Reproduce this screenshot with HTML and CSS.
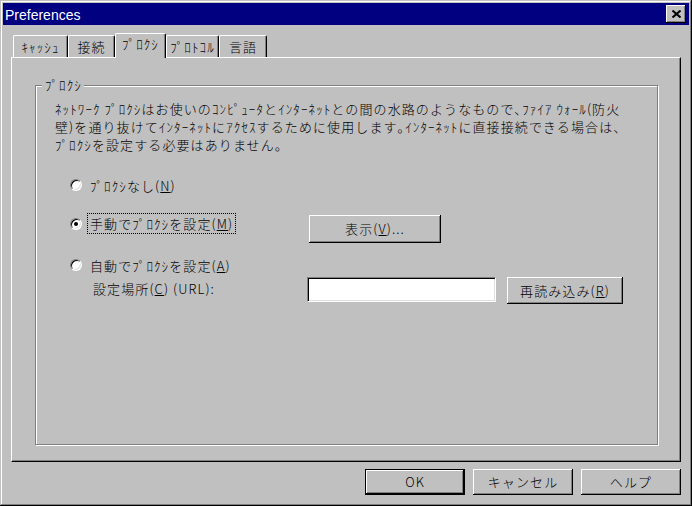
FILE: index.html
```html
<!DOCTYPE html>
<html lang="ja">
<head>
<meta charset="utf-8">
<title>Preferences</title>
<link rel="stylesheet" href="styles.css">
</head>
<body>
<div class="window">
  <div class="titlebar">
    <span class="title">Preferences</span>
    <span class="close"><svg width="9" height="8" viewBox="0 0 9 8"><path d="M0.5 0.5 L8.5 7.5 M8.5 0.5 L0.5 7.5" stroke="#000" stroke-width="2" fill="none"/></svg></span>
  </div>
  <div class="tabs">
    <div class="tab t1">ｷｬｯｼｭ</div>
    <div class="tab t2">接続</div>
    <div class="tab t3 sel">ﾌﾟﾛｸｼ</div>
    <div class="tab t4">ﾌﾟﾛﾄｺﾙ</div>
    <div class="tab t5">言語</div>
  </div>
  <div class="panel">
    <div class="group">
      <span class="legend">ﾌﾟﾛｸｼ</span>
      <div class="desc">ﾈｯﾄﾜｰｸ ﾌﾟﾛｸｼはお使いのｺﾝﾋﾟｭｰﾀとｲﾝﾀｰﾈｯﾄとの間の水路のようなもので､ﾌｧｲｱ ｳｫｰﾙ(防火<br>壁)を通り抜けてｲﾝﾀｰﾈｯﾄにｱｸｾｽするために使用します｡ｲﾝﾀｰﾈｯﾄに直接接続できる場合は、<br>ﾌﾟﾛｸｼを設定する必要はありません。</div>
      <div class="options">
        <div class="opt row1"><span class="radio"></span><span class="lbl">ﾌﾟﾛｸｼなし(<u>N</u>)</span></div>
        <div class="row2">
          <div class="opt wide"><span class="radio checked"></span><span class="lbl focus">手動でﾌﾟﾛｸｼを設定(<u>M</u>)</span></div>
          <button class="btn view">表示(<u>V</u>)...</button>
        </div>
        <div class="opt row3"><span class="radio"></span><span class="lbl">自動でﾌﾟﾛｸｼを設定(<u>A</u>)</span></div>
        <div class="row4">
          <span class="urllabel">設定場所(<u>C</u>) (URL):</span>
          <span class="input"></span>
          <button class="btn reload">再読み込み(<u>R</u>)</button>
        </div>
      </div>
    </div>
  </div>
  <div class="footer">
    <button class="btn foot default">OK</button>
    <button class="btn foot">キャンセル</button>
    <button class="btn foot">ヘルプ</button>
  </div>
</div>
</body>
</html>
```
FILE: styles.css
```css
* { box-sizing: border-box; }
html, body { margin: 0; padding: 0; }
body {
  width: 692px;
  height: 506px;
  overflow: hidden;
  background: #c0c0c0;
  font-family: "Noto Sans CJK JP", sans-serif;
  font-size: 13px;
  font-weight: 300;
  letter-spacing: 1.1px;
  color: #000;
}
.window {
  width: 692px;
  height: 506px;
  padding: 3px;
  background: #c0c0c0;
  box-shadow: inset -1px -1px #000, inset 1px 1px #c0c0c0, inset -2px -2px #808080, inset 2px 2px #fff;
  display: flex;
  flex-direction: column;
}
.titlebar {
  height: 22px;
  flex: none;
  background: #000080;
  color: #fff;
  display: flex;
  align-items: center;
  justify-content: space-between;
  padding: 0 3px 0 2px;
  font-family: "Liberation Sans", Arial, sans-serif;
  font-size: 14px;
  font-weight: 400;
  letter-spacing: 0;
}
.title { padding-top: 1px; }
.close {
  width: 20px;
  height: 18px;
  background: #c0c0c0;
  box-shadow: inset -1px -1px #000, inset 1px 1px #fff, inset -2px -2px #808080;
  display: flex;
  align-items: center;
  justify-content: center;
  padding-left: 1px;
}
.close svg { display: block; }
.tabs {
  display: flex;
  align-items: flex-end;
  height: 24px;
  flex: none;
  margin: 8px 8px 0 10px;
  position: relative;
  z-index: 1;
}
.tab {
  height: 22px;
  border: 1px solid #fff;
  border-bottom: none;
  border-right-color: #000;
  border-radius: 2px 2px 0 0;
  box-shadow: inset -1px 0 #808080;
  background: #c0c0c0;
  text-align: center;
  padding-top: 3px;
  line-height: 16px;
  white-space: nowrap;
}
.tab.sel {
  height: 25px;
  margin-bottom: -1px;
  padding-top: 2px;
}
.t1 { width: 55px; }
.t2 { width: 47px; }
.t3 { width: 51px; }
.t4 { width: 53px; }
.t5 { width: 48px; }
.panel {
  margin: 0 8px;
  height: 405px;
  flex: none;
  border-top: 1px solid #fff;
  border-left: 1px solid #fff;
  border-right: 1px solid #000;
  border-bottom: 1px solid #000;
  box-shadow: inset -1px -1px #808080;
  padding: 27px 0 0 23px;
}
.group {
  position: relative;
  width: 623px;
  height: 360px;
  border: 1px solid #808080;
  box-shadow: inset 1px 1px #fff, 1px 1px #fff;
  padding: 14px 0 0 19px;
}
.legend {
  position: absolute;
  left: 6px;
  top: -9px;
  padding: 0 2px 0 3px;
  background: #c0c0c0;
  line-height: 16px;
}
.desc {
  line-height: 18px;
  white-space: nowrap;
}
.options {
  margin: 21px 0 0 15px;
}
.opt {
  display: flex;
  align-items: center;
  height: 20px;
}
.radio {
  flex: none;
  width: 12px;
  height: 12px;
  border-radius: 50%;
  background: #fff;
  border: 1px solid;
  border-color: #808080 #fff #fff #808080;
  box-shadow: inset 1px 1px #000, inset -1px -1px #dfdfdf;
  display: flex;
  align-items: center;
  justify-content: center;
}
.radio.checked::after {
  content: "";
  width: 4px;
  height: 4px;
  border-radius: 50%;
  background: #000;
}
.lbl {
  margin-left: 5px;
  padding: 0 2px;
  border: 1px dotted transparent;
  line-height: 19px;
  white-space: nowrap;
}
.lbl.focus { border-color: #000; }
.row2 {
  display: flex;
  align-items: flex-start;
  margin-top: 18px;
}
.opt.wide { width: 237px; height: 21px; }
.row3 { margin-top: 12px; }
.row4 {
  display: flex;
  align-items: flex-start;
  height: 27px;
  margin-top: 2px;
}
.urllabel {
  margin-left: 23px;
  width: 214px;
  line-height: 24px;
  white-space: nowrap;
}
.input {
  width: 189px;
  height: 25px;
  background: #fff;
  border: 1px solid;
  border-color: #808080 #fff #fff #808080;
  box-shadow: inset 1px 1px #000, inset -1px -1px #dfdfdf;
}
.btn {
  font-family: inherit;
  font-size: inherit;
  font-weight: inherit;
  letter-spacing: inherit;
  color: #000;
  padding: 0;
  margin: 0;
  border: none;
  background: #c0c0c0;
  box-shadow: inset -1px -1px #000, inset 1px 1px #fff, inset -2px -2px #808080;
  display: flex;
  align-items: center;
  justify-content: center;
  white-space: nowrap;
  line-height: 16px;
}
.btn.view { width: 132px; height: 28px; margin: 2px 0 0 2px; }
.btn.reload { width: 116px; height: 27px; margin-left: 11px; }
.footer {
  display: flex;
  justify-content: flex-end;
  gap: 8px;
  margin: 7px 8px 0 0;
}
.btn.foot { width: 100px; height: 26px; }
.btn.default {
  box-shadow: inset 0 0 0 1px #000, inset -2px -2px #000, inset 2px 2px #fff, inset -3px -3px #808080;
}
```
